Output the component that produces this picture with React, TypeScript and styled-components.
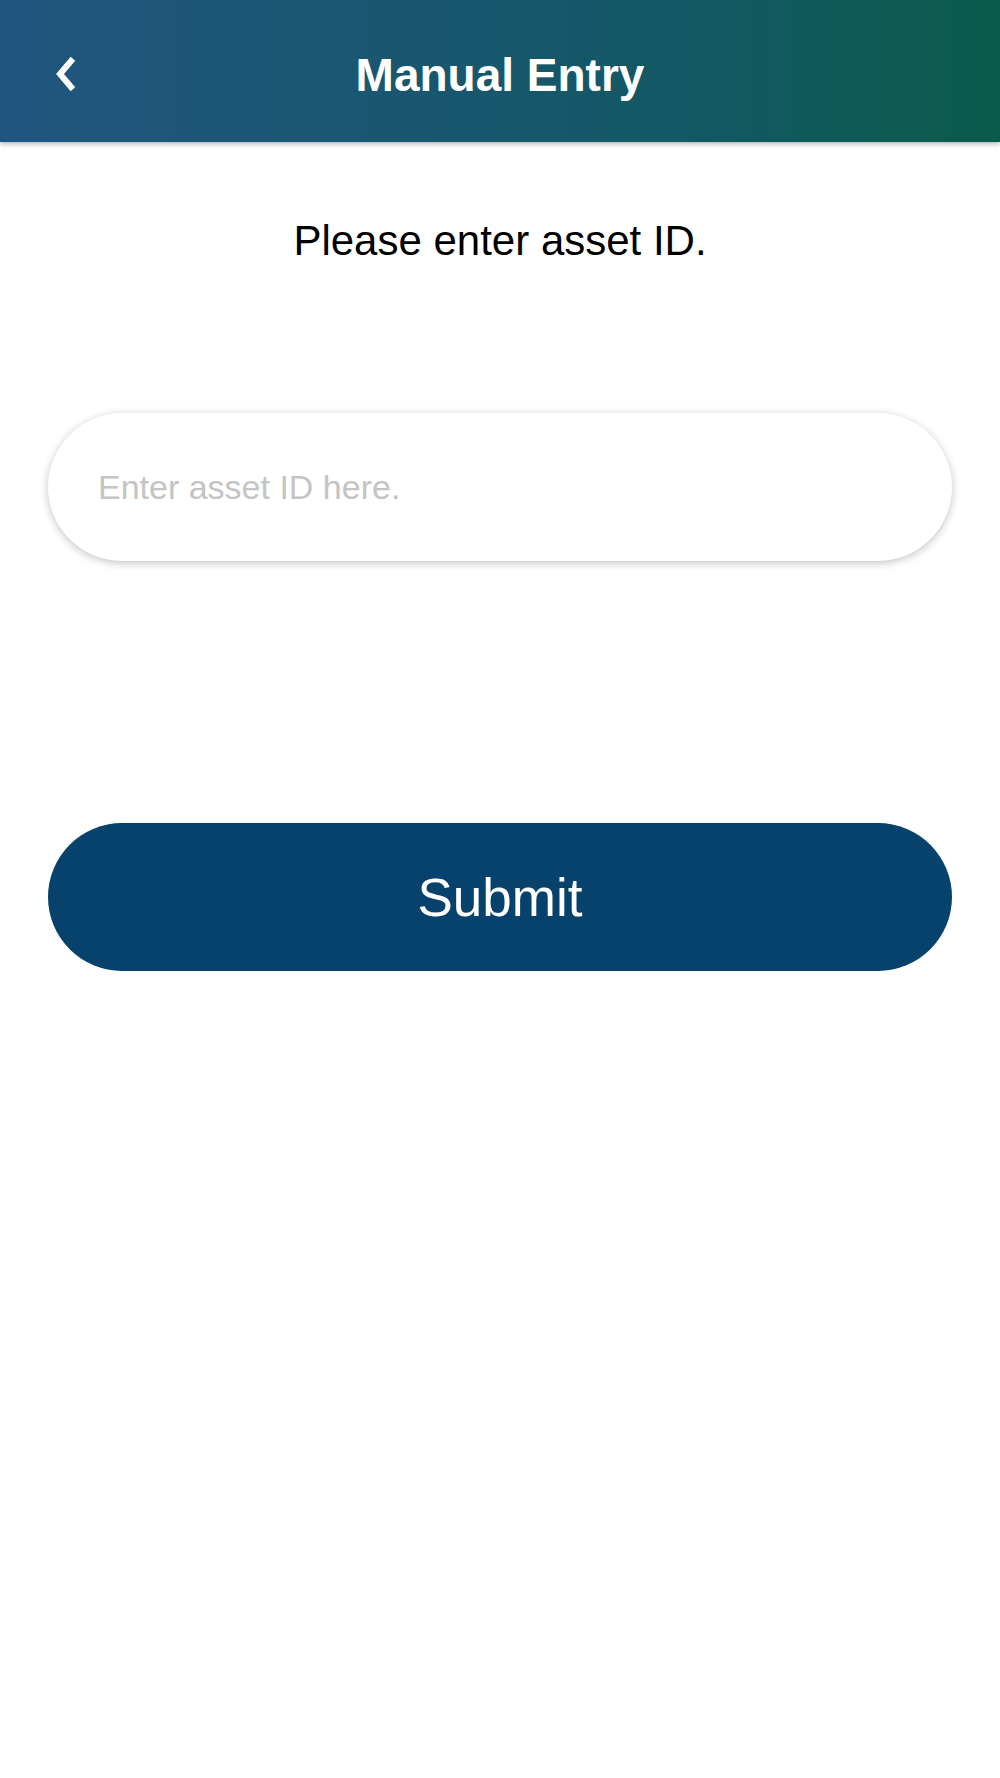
import styled, { createGlobalStyle } from "styled-components";
import { useState } from "react";

const GlobalStyle = createGlobalStyle`
  html, body {
    margin: 0;
    padding: 0;
    background: #ffffff;
  }
  * {
    box-sizing: border-box;
  }
`;

const App = () => {
  const [assetId, setAssetId] = useState("");

  return (
    <Container>
      <GlobalStyle />
      <Header>
        <BackButton aria-label="Back">
          <svg width="22" height="34" viewBox="0 0 22 34" fill="none">
            <path
              d="M16 4 L5 17 L16 30"
              stroke="#ffffff"
              strokeWidth="6"
              strokeLinecap="square"
              strokeLinejoin="miter"
            />
          </svg>
        </BackButton>
        <Title>Manual Entry</Title>
      </Header>
      <Content>
        <Prompt>Please enter asset ID.</Prompt>
        <AssetInput
          value={assetId}
          onChange={(e) => setAssetId(e.target.value)}
          placeholder="Enter asset ID here."
        />
        <SubmitButton onClick={() => setAssetId("")}>Submit</SubmitButton>
      </Content>
    </Container>
  );
};

export default App;

const Container = styled.div`
  width: 100%;
  min-height: 100vh;
  background: #ffffff;

  display: flex;
  flex-direction: column;
  font-family: "Liberation Sans", Arial, sans-serif;
`;

const Header = styled.header`
  position: relative;
  width: 100%;
  height: 142px;

  display: flex;
  align-items: center;
  justify-content: center;

  background: linear-gradient(90deg, #21557f 0%, #1a5670 40%, #125863 70%, #0b5b4c 100%);
  box-shadow: 0 2px 5px rgba(0, 0, 0, 0.3);
  z-index: 1;
`;

const BackButton = styled.button`
  position: absolute;
  left: 54px;
  top: 57px;

  width: 24px;
  height: 34px;
  padding: 0;

  display: flex;
  align-items: center;
  justify-content: center;

  background: none;
  border: 0;
  cursor: pointer;
`;

const Title = styled.h1`
  margin: 0;
  padding-top: 8px;

  color: #ffffff;
  font-size: 46px;
  font-weight: 700;
  letter-spacing: 0;
`;

const Content = styled.main`
  width: 100%;
  padding: 0 48px;

  display: flex;
  flex-direction: column;
  align-items: center;
`;

const Prompt = styled.p`
  margin: 74px 0 0;
  height: 50px;

  color: #000000;
  font-size: 42px;
  line-height: 50px;
  text-align: center;
`;

const AssetInput = styled.input`
  width: 100%;
  height: 148px;
  margin-top: 147px;
  padding: 0 50px;

  background: #ffffff;
  border: 0;
  border-radius: 74px;
  box-shadow: 0 2px 9px rgba(0, 0, 0, 0.24);
  outline: none;

  color: #000000;
  font-family: "Liberation Sans", Arial, sans-serif;
  font-size: 34px;

  &::placeholder {
    color: #c4c4c4;
  }
`;

const SubmitButton = styled.button`
  width: 100%;
  height: 148px;
  margin-top: 262px;

  background-color: #06426c;
  color: #ffffff;

  border: 0;
  border-radius: 74px;
  font-family: "Liberation Sans", Arial, sans-serif;
  font-size: 53px;
  font-weight: 400;

  cursor: pointer;
`;
